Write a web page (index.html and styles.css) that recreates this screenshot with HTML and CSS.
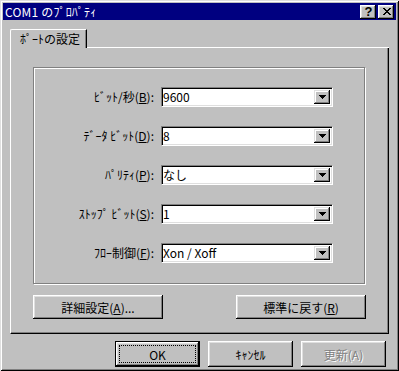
FILE: index.html
```html
<!DOCTYPE html>
<html lang="ja">
<head>
    <meta charset="UTF-8">
    <title>COM1 のﾌﾟﾛﾊﾟﾃｨ</title>
    <link rel="stylesheet" href="styles.css">
</head>
<body>
    <div class="window">
        <div class="titlebar">
            <span class="title">COM1 のﾌﾟﾛﾊﾟﾃｨ</span>
            <div class="caption-buttons">
                <span class="cap-btn help">?</span>
                <span class="cap-btn close">
                    <svg width="8" height="7" viewBox="0 0 8 7" shape-rendering="crispEdges">
                        <path d="M0 0h2v1h-2zM6 0h2v1h-2zM1 1h2v1h-2zM5 1h2v1h-2zM2 2h4v1h-4zM3 3h2v1h-2zM2 4h4v1h-4zM1 5h2v1h-2zM5 5h2v1h-2zM0 6h2v1h-2zM6 6h2v1h-2z" fill="#000"/>
                    </svg>
                </span>
            </div>
        </div>

        <div class="content">
            <div class="tabstrip">
                <div class="tab">ﾎﾟｰﾄの設定</div>
                <div class="tab-fill"></div>
            </div>

            <div class="panel">
                <div class="group">
                    <span class="field-label">ﾋﾞｯﾄ/秒(<u>B</u>):</span>
                    <div class="combo"><span class="combo-value">9600</span><span class="combo-btn"><svg width="7" height="4" viewBox="0 0 7 4" shape-rendering="crispEdges"><path d="M0 0h7v1h-7zM1 1h5v1h-5zM2 2h3v1h-3zM3 3h1v1h-1z" fill="#000"/></svg></span></div>

                    <span class="field-label">ﾃﾞｰﾀ ﾋﾞｯﾄ(<u>D</u>):</span>
                    <div class="combo"><span class="combo-value">8</span><span class="combo-btn"><svg width="7" height="4" viewBox="0 0 7 4" shape-rendering="crispEdges"><path d="M0 0h7v1h-7zM1 1h5v1h-5zM2 2h3v1h-3zM3 3h1v1h-1z" fill="#000"/></svg></span></div>

                    <span class="field-label">ﾊﾟﾘﾃｨ(<u>P</u>):</span>
                    <div class="combo"><span class="combo-value">なし</span><span class="combo-btn"><svg width="7" height="4" viewBox="0 0 7 4" shape-rendering="crispEdges"><path d="M0 0h7v1h-7zM1 1h5v1h-5zM2 2h3v1h-3zM3 3h1v1h-1z" fill="#000"/></svg></span></div>

                    <span class="field-label">ｽﾄｯﾌﾟ ﾋﾞｯﾄ(<u>S</u>):</span>
                    <div class="combo"><span class="combo-value">1</span><span class="combo-btn"><svg width="7" height="4" viewBox="0 0 7 4" shape-rendering="crispEdges"><path d="M0 0h7v1h-7zM1 1h5v1h-5zM2 2h3v1h-3zM3 3h1v1h-1z" fill="#000"/></svg></span></div>

                    <span class="field-label">ﾌﾛｰ制御(<u>F</u>):</span>
                    <div class="combo"><span class="combo-value">Xon / Xoff</span><span class="combo-btn"><svg width="7" height="4" viewBox="0 0 7 4" shape-rendering="crispEdges"><path d="M0 0h7v1h-7zM1 1h5v1h-5zM2 2h3v1h-3zM3 3h1v1h-1z" fill="#000"/></svg></span></div>
                </div>

                <div class="panel-buttons">
                    <button class="btn wide">詳細設定(<u>A</u>)...</button>
                    <button class="btn wide">標準に戻す(<u>R</u>)</button>
                </div>
            </div>

            <div class="dialog-buttons">
                <button class="btn default"><span class="focus">OK</span></button>
                <button class="btn">ｷｬﾝｾﾙ</button>
                <button class="btn disabled">更新(A)</button>
            </div>
        </div>
    </div>
</body>
</html>
```

FILE: styles.css
```css
body {
    margin: 0;
    background: #c0c0c0;
    font-family: "Noto Sans CJK JP", sans-serif;
    font-size: 12px;
    color: #000;
}
.window {
    width: 399px;
    height: 371px;
    box-sizing: border-box;
    padding: 3px;
    background: #c0c0c0;
    box-shadow: inset 1px 1px #dfdfdf, inset -1px -1px #000, inset 2px 2px #fff, inset -2px -2px #808080;
}
.titlebar {
    height: 17px;
    background: #000080;
    color: #fff;
    display: flex;
    align-items: center;
    justify-content: space-between;
    padding: 0 2px 0 2px;
}
.title {
    line-height: 17px;
    letter-spacing: 0.2px;
}
.caption-buttons {
    display: flex;
    gap: 2px;
}
.cap-btn {
    width: 16px;
    height: 14px;
    box-sizing: border-box;
    background: #c0c0c0;
    box-shadow: inset -1px -1px #000, inset 1px 1px #fff, inset -2px -2px #808080, inset 2px 2px #dfdfdf;
    display: flex;
    align-items: center;
    justify-content: center;
    color: #000;
}
.help {
    font-family: "Liberation Sans", sans-serif;
    font-weight: bold;
    font-size: 13px;
    line-height: 14px;
    padding-left: 1px;
}
.close svg {
    display: block;
    margin: 0 0 1px 1px;
}
.content {
    padding: 9px 7px 0 7px;
}
.tabstrip {
    display: flex;
    height: 19px;
}
.tab {
    width: 77px;
    box-sizing: border-box;
    border-top: 1px solid #fff;
    border-left: 1px solid #fff;
    border-right: 1px solid #000;
    border-top-left-radius: 2px;
    box-shadow: inset -1px 0 #808080;
    padding: 0 0 1px 9px;
    line-height: 17px;
}
.tab-fill {
    flex: 1;
    border-bottom: 1px solid #fff;
}
.panel {
    height: 286px;
    box-sizing: border-box;
    border-left: 1px solid #fff;
    border-right: 1px solid #000;
    border-bottom: 1px solid #000;
    box-shadow: inset -1px -1px #808080;
    padding: 19px 0 0 22px;
}
.group {
    width: 332px;
    height: 217px;
    box-sizing: border-box;
    border: 1px solid #808080;
    box-shadow: 1px 1px 0 #fff, inset 1px 1px 0 #fff;
    padding-top: 19px;
    display: grid;
    grid-template-columns: 120px 172px;
    grid-auto-rows: 20px;
    column-gap: 7px;
    row-gap: 19px;
}
.field-label {
    text-align: right;
    line-height: 20px;
}
.combo {
    display: flex;
    align-items: center;
    box-sizing: border-box;
    border: 1px solid;
    border-color: #808080 #fff #fff #808080;
    box-shadow: inset 1px 1px #000, inset -1px -1px #dfdfdf;
    background: #fff;
    padding: 2px 2px 2px 1px;
}
.combo-value {
    flex: 1;
    line-height: 16px;
}
.combo-btn {
    width: 16px;
    height: 14px;
    box-sizing: border-box;
    background: #c0c0c0;
    box-shadow: inset -1px -1px #000, inset 1px 1px #dfdfdf, inset -2px -2px #808080, inset 2px 2px #fff;
    display: flex;
    align-items: center;
    justify-content: center;
}
.combo-btn svg {
    display: block;
}
.panel-buttons {
    width: 333px;
    display: flex;
    justify-content: space-between;
    margin-top: 11px;
}
.btn {
    width: 85px;
    height: 26px;
    box-sizing: border-box;
    border: none;
    margin: 0;
    padding: 0;
    background: #c0c0c0;
    box-shadow: inset -1px -1px #000, inset 1px 1px #fff, inset -2px -2px #808080, inset 2px 2px #dfdfdf;
    font-family: inherit;
    font-size: 12px;
    color: #000;
    display: flex;
    align-items: center;
    justify-content: center;
}
.btn.wide {
    width: 130px;
    height: 24px;
}
.dialog-buttons {
    display: flex;
    justify-content: flex-end;
    gap: 8px;
    margin-top: 7px;
    padding-right: 3px;
}
.btn.default {
    border: 1px solid #000;
    padding: 3px;
}
.focus {
    flex: 1;
    align-self: stretch;
    display: flex;
    align-items: center;
    justify-content: center;
    border: 1px dotted #000;
}
.btn.disabled {
    color: #808080;
    text-shadow: 1px 1px 0 #fff;
}
```
